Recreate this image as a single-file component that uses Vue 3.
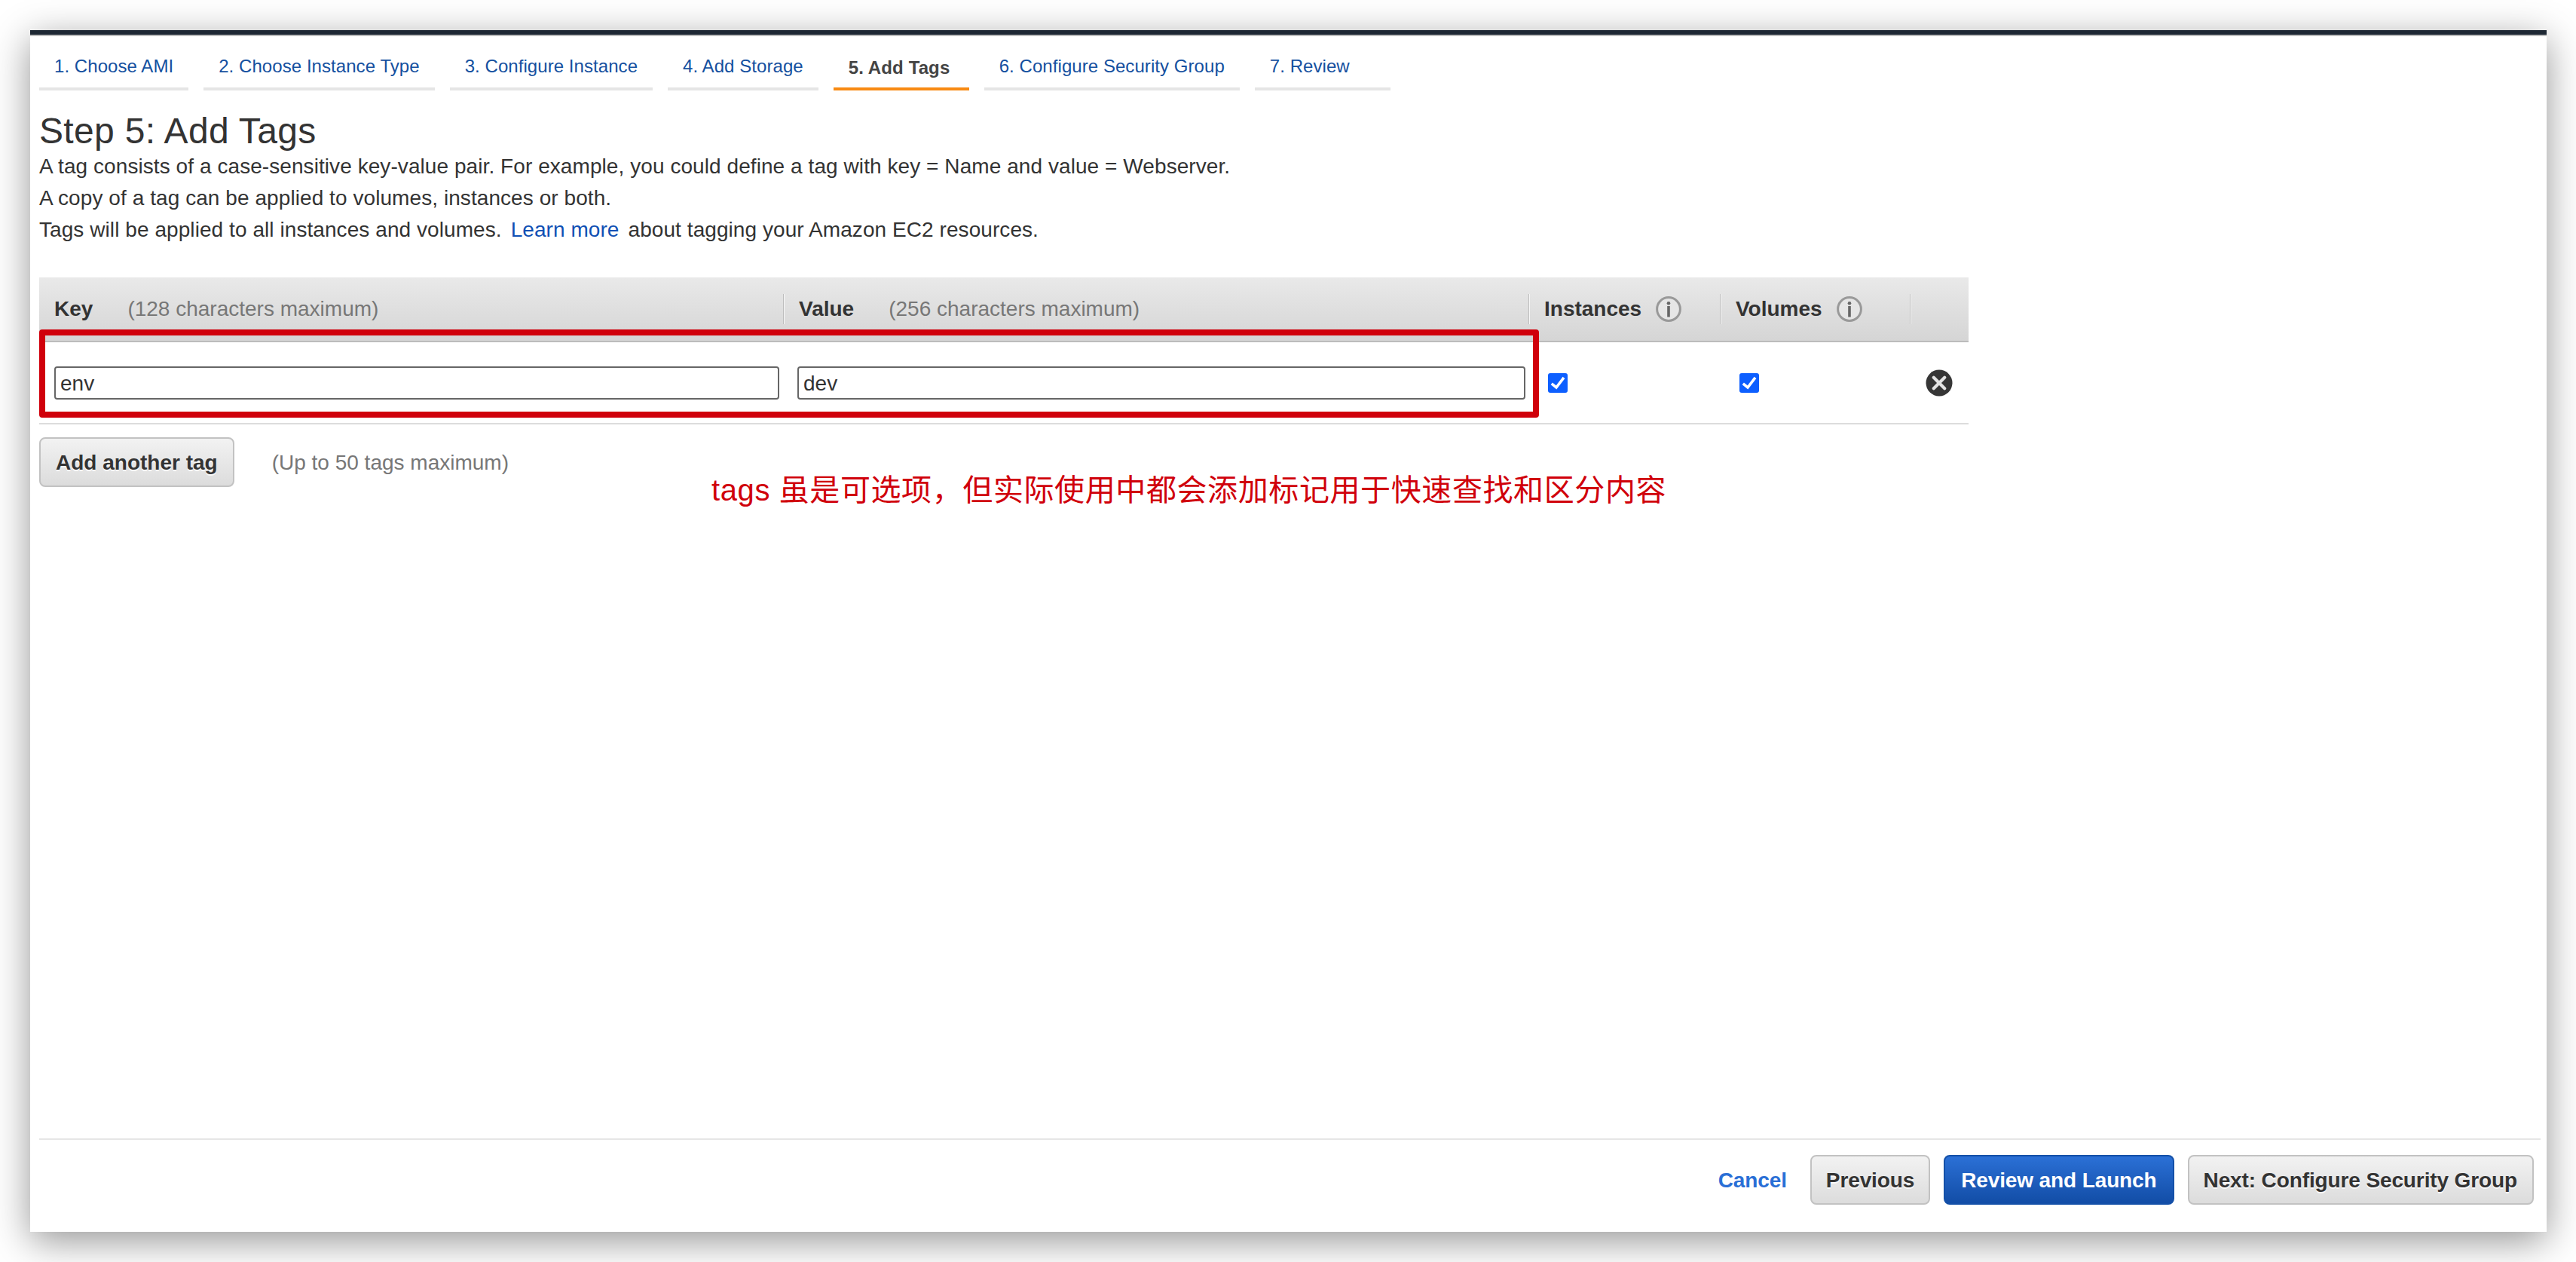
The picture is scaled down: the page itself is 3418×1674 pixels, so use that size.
<script setup>
const tabs = [
  { label: '1. Choose AMI' },
  { label: '2. Choose Instance Type' },
  { label: '3. Configure Instance' },
  { label: '4. Add Storage' },
  { label: '5. Add Tags', active: true },
  { label: '6. Configure Security Group' },
  { label: '7. Review' },
]
</script>

<template>
  <div class="page">
    <div class="window">
      <div class="topbar"></div>
      <nav class="tabs">
        <a v-for="t in tabs" :key="t.label" class="tab" :class="{ active: t.active }">{{ t.label }}</a>
      </nav>
      <main class="content">
        <h1>Step 5: Add Tags</h1>
        <p>A tag consists of a case-sensitive key-value pair. For example, you could define a tag with key = Name and value = Webserver.</p>
        <p>A copy of a tag can be applied to volumes, instances or both.</p>
        <p>Tags will be applied to all instances and volumes.<a class="learn">Learn more</a>about tagging your Amazon EC2 resources.</p>

        <section class="table">
          <div class="thead">
            <div class="th"><b>Key</b><span class="hint">(128 characters maximum)</span></div>
            <div class="th"><b>Value</b><span class="hint">(256 characters maximum)</span></div>
            <div class="th">
              <b>Instances</b>
              <svg class="info" viewBox="0 0 34 34">
                <circle cx="17" cy="17" r="15.4" fill="#e6e6e6" stroke="#999" stroke-width="3" />
                <circle cx="17" cy="9.2" r="2.3" fill="#666" />
                <rect x="15.2" y="13" width="3.6" height="14.5" fill="#666" />
              </svg>
            </div>
            <div class="th">
              <b>Volumes</b>
              <svg class="info" viewBox="0 0 34 34">
                <circle cx="17" cy="17" r="15.4" fill="#e6e6e6" stroke="#999" stroke-width="3" />
                <circle cx="17" cy="9.2" r="2.3" fill="#666" />
                <rect x="15.2" y="13" width="3.6" height="14.5" fill="#666" />
              </svg>
            </div>
            <div class="th last"></div>
          </div>
          <div class="row">
            <div class="cell key"><input class="field" value="env" readonly /></div>
            <div class="cell val"><input class="field" value="dev" readonly /></div>
            <div class="cell chk">
              <svg class="check" viewBox="0 0 26 26">
                <rect width="26" height="26" rx="3" fill="#0d5fff" />
                <path d="M4.8 13.8 L11 19 L21 5.8" fill="none" stroke="#fff" stroke-width="3.6" />
              </svg>
            </div>
            <div class="cell chk">
              <svg class="check" viewBox="0 0 26 26">
                <rect width="26" height="26" rx="3" fill="#0d5fff" />
                <path d="M4.8 13.8 L11 19 L21 5.8" fill="none" stroke="#fff" stroke-width="3.6" />
              </svg>
            </div>
            <div class="cell del">
              <svg class="close" viewBox="0 0 36 36">
                <circle cx="18" cy="18" r="17.5" fill="#363636" />
                <path d="M10.8 10.8 L25.2 25.2 M25.2 10.8 L10.8 25.2" stroke="#e4e4e4" stroke-width="4.2" stroke-linecap="round" />
              </svg>
            </div>
          </div>
          <div class="redbox"></div>
        </section>

        <div class="addrow">
          <button class="btn">Add another tag</button>
          <span class="addhint">(Up to 50 tags maximum)</span>
          <span class="note">tags 虽是可选项，但实际使用中都会添加标记用于快速查找和区分内容</span>
        </div>
      </main>
      <footer class="footer">
        <a class="cancel">Cancel</a>
        <button class="btn narrow">Previous</button>
        <button class="btn narrow primary">Review and Launch</button>
        <button class="btn narrow next">Next: Configure Security Group</button>
      </footer>
    </div>
  </div>
</template>

<style>
html, body { margin: 0; background: #fff; }
</style>

<style scoped>
.page {
  width: 3418px;
  height: 1674px;
  box-sizing: border-box;
  padding: 40px 0 0 40px;
  overflow: hidden;
  font-family: "Liberation Sans", "Noto Sans CJK SC", sans-serif;
  color: #333;
  font-size: 28px;
}
.window {
  width: 3339px;
  height: 1594px;
  background: #fff;
  display: flex;
  flex-direction: column;
  box-shadow: 0 12px 48px rgba(0, 0, 0, 0.42);
}
.topbar {
  height: 6px;
  background: #1d2733;
  border-bottom: 2px solid #bbb;
}
.tabs {
  display: flex;
  gap: 20px;
  padding-left: 12px;
}
.tab {
  min-width: 180px;
  box-sizing: border-box;
  padding: 22px 20px 10px;
  line-height: 36px;
  font-size: 24px;
  letter-spacing: 0.06px;
  color: #14509f;
  border-bottom: 4px solid #e5e5e5;
}
.tab.active {
  padding-top: 24px;
  padding-bottom: 8px;
  font-weight: 700;
  letter-spacing: 0.12px;
  color: #444;
  border-bottom-color: #f88a12;
}
.content {
  padding: 0 12px;
  flex: 1;
}
h1 {
  margin: 28px 0 0;
  font-size: 48px;
  line-height: 52px;
  font-weight: 400;
  letter-spacing: 0.35px;
  color: #333;
}
p {
  margin: 0;
  line-height: 42px;
  white-space: nowrap;
  letter-spacing: 0.07px;
  color: #333;
}
.learn {
  color: #1050b4;
  margin: 0 12px;
}
.table {
  position: relative;
  width: 2560px;
  margin-top: 42px;
}
.thead {
  display: grid;
  grid-template-columns: 988px 989px 254px 252px 77px;
  padding: 22px 0;
  background: linear-gradient(#e9e9e9, #d5d5d5);
  border-bottom: 2px solid #bcbcbc;
}
.th {
  display: flex;
  align-items: center;
  height: 40px;
  line-height: 42px;
  padding-left: 20px;
  box-sizing: border-box;
  border-right: 1px solid #bdbdbd;
  box-shadow: 1px 0 0 #f7f7f7;
  white-space: nowrap;
}
.th.last { border: 0; box-shadow: none; }
.hint {
  margin-left: 46px;
  color: #777;
}
.info {
  width: 34px;
  height: 34px;
  margin-left: 19px;
  flex: none;
}
.row {
  display: grid;
  grid-template-columns: 988px 989px 254px 252px 77px;
  height: 107px;
  border-bottom: 2px solid #dcdcdc;
}
.cell {
  display: flex;
  align-items: center;
}
.key { padding: 0 6px 0 20px; }
.val { padding: 0 5px 0 18px; }
.chk { padding-left: 25px; }
.del { padding: 1px 0 0 20px; }
.field {
  width: 100%;
  height: 44px;
  box-sizing: border-box;
  border: 2px solid #666;
  border-radius: 4px;
  padding: 2px 6px 0;
  font: inherit;
  color: #333;
  outline: none;
}
.check { width: 26px; height: 26px; }
.close { width: 36px; height: 36px; }
.redbox {
  position: absolute;
  left: 0;
  top: 69px;
  width: 1990px;
  height: 117px;
  box-sizing: border-box;
  border: 8px solid #d0000b;
  border-radius: 4px;
}
.addrow {
  position: relative;
  display: flex;
  align-items: center;
  margin-top: 17px;
}
.addhint {
  margin-left: 50px;
  padding-top: 2px;
  color: #777;
}
.note {
  position: absolute;
  left: 892px;
  top: 46px;
  font-size: 40px;
  line-height: 48px;
  letter-spacing: 0.6px;
  color: #d0000b;
  white-space: nowrap;
}
.btn {
  height: 66px;
  padding: 2px 20px 0;
  border: 2px solid #c2c2c2;
  border-radius: 8px;
  background: linear-gradient(#f2f2f2, #dcdcdc);
  font: 700 28px "Liberation Sans", sans-serif;
  color: #333;
  text-shadow: 0 2px 0 rgba(255, 255, 255, 0.85);
  white-space: nowrap;
}
.btn.narrow {
  padding: 2px 19px 0;
  letter-spacing: -0.12px;
}
.btn.narrow.next {
  padding: 2px 20px 0 19px;
}
.btn.narrow.primary {
  padding: 2px 21px 0;
  border-color: #1450a8;
  background: linear-gradient(#2b70d6, #124da6);
  color: #fff;
  text-shadow: none;
}
.footer {
  display: flex;
  align-items: center;
  justify-content: flex-end;
  gap: 18px;
  margin: 0 8px 0 12px;
  padding: 20px 9px 36px 0;
  border-top: 2px solid #e6e6e6;
}
.cancel {
  font-weight: 700;
  padding-top: 2px;
  letter-spacing: -0.12px;
  color: #2a6fd6;
  margin-right: 13px;
}
</style>
